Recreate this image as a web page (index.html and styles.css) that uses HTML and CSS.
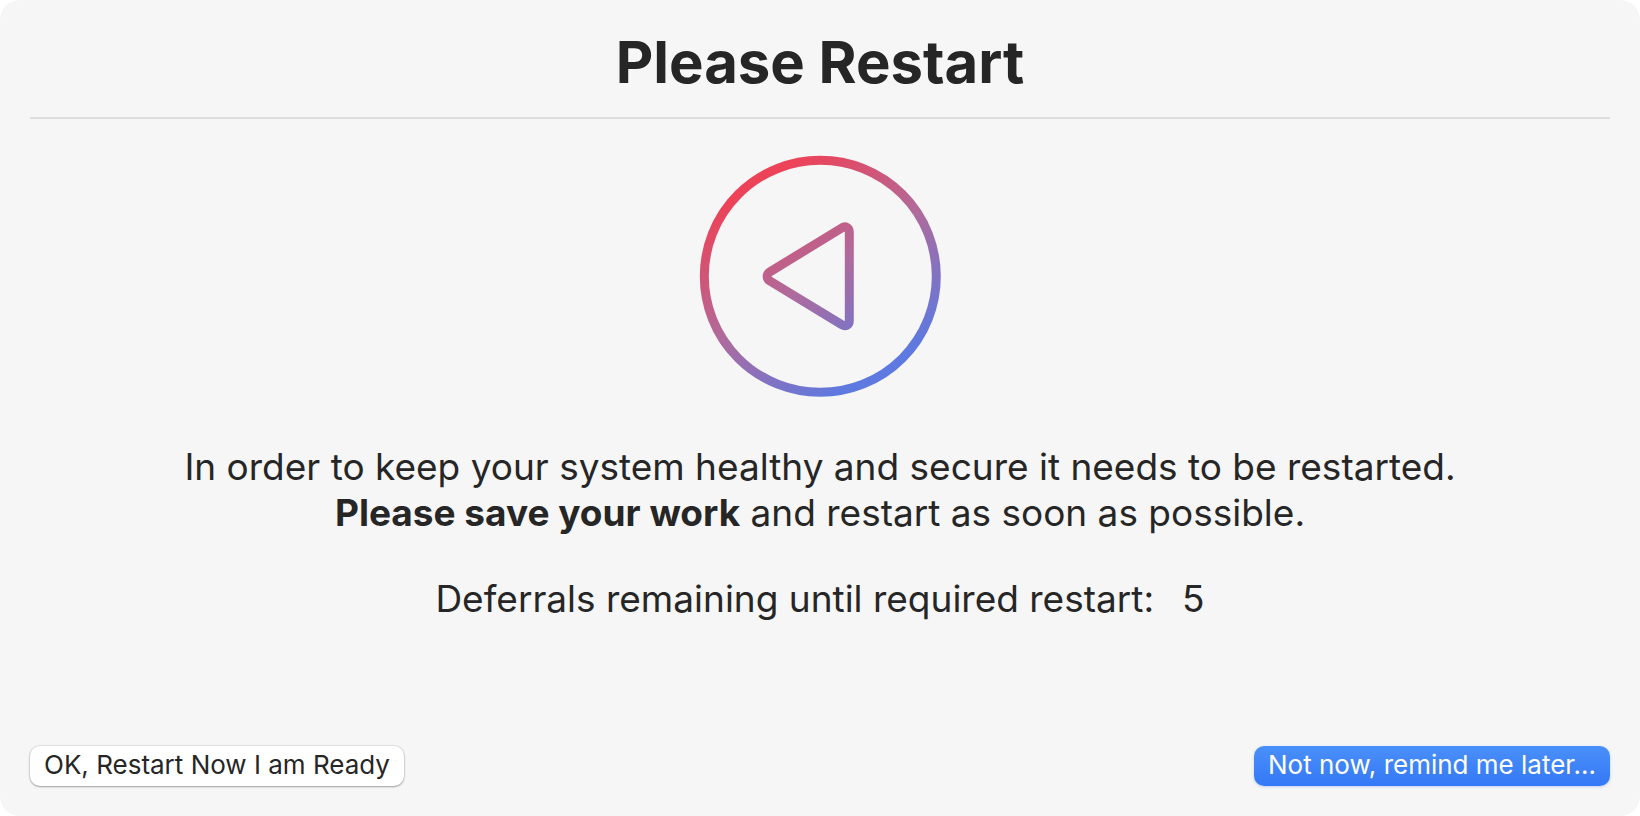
FILE: index.html
```html
<!DOCTYPE html>
<html lang="en">
<head>
<meta charset="utf-8">
<title>Please Restart</title>
<link rel="stylesheet" href="styles.css">
</head>
<body>
<main class="dialog">
  <header class="dialog-header"><h1 class="title">Please Restart</h1></header>
  <section class="content">
    <svg class="restart-icon" viewBox="0 0 242 242" aria-hidden="true">
      <defs>
        <linearGradient id="ring" gradientUnits="userSpaceOnUse" x1="62" y1="28" x2="180" y2="214">
          <stop offset="0" stop-color="#ec4359"/>
          <stop offset="0.5" stop-color="#af6b9c"/>
          <stop offset="1" stop-color="#5e79e0"/>
        </linearGradient>
      </defs>
      <g fill="none" stroke="url(#ring)" stroke-width="9">
        <circle cx="121.300" cy="121.300" r="116"/>
        <path d="M142.700 73 C146.500 70.500 150.300 72.500 150.300 77 V165.700 C150.300 170 146.500 172 142.700 169.700 L71 126 C67.200 123.500 67.200 119.300 71 116.800 Z"/>
      </g>
    </svg>
    <p class="message">In order to keep your system healthy and secure it needs to be restarted.<br><strong>Please save your work</strong> and restart as soon as possible.</p>
    <p class="deferrals"><span>Deferrals remaining until required restart:</span><span>5</span></p>
  </section>
  <footer class="actions">
    <button class="button" type="button">OK, Restart Now I am Ready</button>
    <button class="button button-primary" type="button">Not now, remind me later...</button>
  </footer>
</main>
</body>
</html>
```
FILE: styles.css
```css
* { box-sizing: border-box; }
body {
  margin: 0;
  background: #fff;
  color: #262626;
  font-family: Inter, "Liberation Sans", sans-serif;
}
.dialog {
  display: flex;
  flex-direction: column;
  min-height: 100vh;
  padding: 0 30px 30px;
  border-radius: 20px;
  background: #f6f6f6;
}
.dialog-header {
  padding: 26px 0 19px;
  border-bottom: 2px solid #dedede;
  text-align: center;
}
.title {
  margin: 0;
  font-size: 58px;
  line-height: 72px;
  font-weight: 700;
}
.content {
  display: flex;
  flex: 1;
  flex-direction: column;
  align-items: center;
  padding-top: 36px;
  font-size: 37px;
  line-height: 46px;
  text-align: center;
}
.restart-icon { width: 242px; height: 242px; }
.message { margin: 47px 0 40px; }
.message strong { font-weight: 700; }
.deferrals { display: flex; gap: 28px; margin: 0; }
.actions { display: flex; justify-content: space-between; }
.button {
  height: 40px;
  padding: 0 14px 2px;
  border: 0;
  border-radius: 10px;
  background: #fff;
  color: #262626;
  box-shadow: 0 0 1px 1px rgba(0, 0, 0, 0.08), 0 1px 2px rgba(0, 0, 0, 0.3);
  font-family: inherit;
  font-size: 26px;
  line-height: 38px;
}
.button-primary {
  background: linear-gradient(#4a90f9, #3478f6);
  color: #fff;
  box-shadow: 0 1px 3px rgba(52, 120, 246, 0.3);
}
```
